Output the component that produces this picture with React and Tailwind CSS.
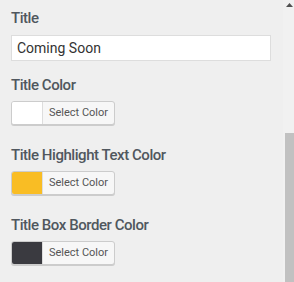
import React from 'react';

const ColorField = ({ label, swatch }) => (
  <div className="pt-[14px] pb-[6px]">
    <div className="text-[15px] leading-[20px] font-medium tracking-[-0.03em] text-[#50575e]">{label}</div>
    <button
      type="button"
      className="mt-[6px] flex h-[24px] w-[104px] items-stretch overflow-hidden rounded-[3px] border border-[#cccccc] bg-[#f7f7f7] shadow-[0_1px_0_#cccccc]"
    >
      <span className={`w-[31px] border-r border-[#dddddd] ${swatch}`} />
      <span className="flex flex-1 items-center justify-center text-[11px] text-[#555555]">Select Color</span>
    </button>
  </div>
);

export default function App() {
  return (
    <div className="flex h-[282px] w-[294px] overflow-hidden bg-[#efefef] font-['Roboto',sans-serif]">
      <div className="flex-1 pl-[11px] pr-[12px] pt-[8px]">
        <div className="text-[15px] leading-[20px] font-medium tracking-[-0.03em] text-[#50575e]">Title</div>
        <input
          readOnly
          value="Coming Soon"
          className="mt-[7px] block h-[26px] w-full border border-[#dddddd] bg-white px-[5px] text-[14px] text-[#333333] outline-none"
        />
        <ColorField label="Title Color" swatch="bg-white" />
        <ColorField label="Title Highlight Text Color" swatch="bg-[#f9bd24]" />
        <ColorField label="Title Box Border Color" swatch="bg-[#3a3a40]" />
      </div>
      <div className="flex w-[11px] flex-col items-end bg-[#f1f1f1]">
        <svg width="9" height="8" viewBox="0 0 9 8" className="mt-[1px]">
          <path d="M1 6 L4.5 2 L8 6 Z" fill="#505050" />
        </svg>
        <div className="mt-[124px] w-[9px] flex-1 bg-[#c1c1c1]" />
      </div>
    </div>
  );
}
